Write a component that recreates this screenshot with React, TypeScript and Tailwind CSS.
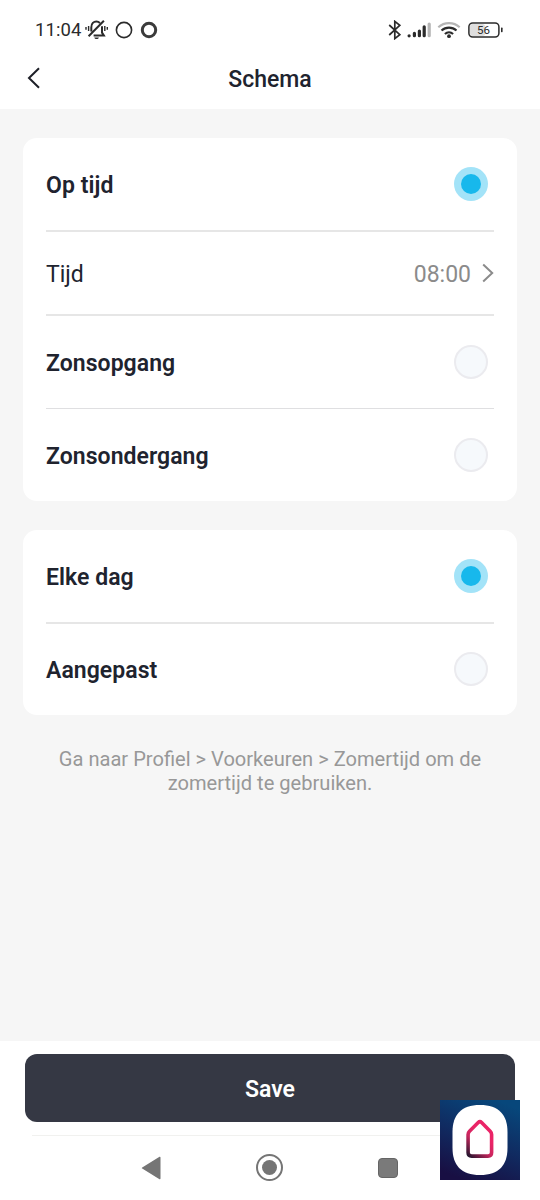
import { useState } from 'react';

interface RadioRowProps {
  label: string;
  checked: boolean;
  onSelect: () => void;
}

function StatusBar() {
  return (
    <div className="flex h-[48px] items-start justify-between pt-[19px] pr-[37px] pl-[35px] text-[#2b2b2b]">
      <div className="flex h-[22px] items-center">
        <span className="w-[50px] text-[18.5px] leading-[22px] tracking-[0.1px] whitespace-nowrap">11:04</span>
        {/* Silent mode */}
        <svg className="h-[22px] w-[24px]" viewBox="0 0 24 22" fill="none" stroke="currentColor" strokeWidth="2">
          <path d="M6.3 12.5V8.4C6.3 4.5 8.7 2.6 11.4 2.6c1.5 0 2.6.5 3.5 1.3M17 7.2v6.4l1.9 3H8.6M18.9 1.8 3.6 17.2" />
          <path d="M3.6 6.9v5M1 8v2.8M19.8 6.9v5M22.3 8v2.8" strokeWidth="1.4" />
          <path d="M9.3 18.4h4.6c-.5 2-4.1 2-4.6 0z" fill="currentColor" stroke="none" />
        </svg>
        <svg className="ml-[6px] size-[18px]" viewBox="0 0 18 18" fill="none" stroke="currentColor">
          <circle cx="9" cy="9" r="7.6" strokeWidth="1.6" />
        </svg>
        <svg className="ml-[7px] size-[18px]" viewBox="0 0 18 18" fill="none" stroke="#3b3b3b">
          <circle cx="9" cy="9" r="6.7" strokeWidth="3" />
        </svg>
      </div>
      <div className="flex h-[22px] items-center">
        {/* Bluetooth */}
        <svg className="h-[20px] w-[14px]" viewBox="0 0 14 20" fill="none" stroke="currentColor" strokeWidth="1.7">
          <path d="m1.2 5 10.6 9.6-5 4V1.4l5 4L1.2 15" />
        </svg>
        {/* Signal */}
        <svg className="ml-[5px] h-[16px] w-[24px]" viewBox="0 0 24 16" fill="none" stroke="currentColor" strokeWidth="3.2" strokeLinecap="round">
          <path d="M2.1 13.8v0" />
          <path d="M7.4 13.7v-2.4M12.4 13.7V9M17.2 13.7V4.8" />
          <path d="M22.2 13.7V2" stroke="#b5b5b5" />
        </svg>
        {/* Wifi */}
        <svg className="ml-[6px] h-[18px] w-[24px]" viewBox="0 0 24 18" fill="none" stroke="currentColor" strokeWidth="2.1">
          <path d="M1.3 6.2c6.1-5.5 15.3-5.5 21.4 0" stroke="#b5b5b5" />
          <path d="M4.5 9.6c4.3-4 10.7-4 15 0M7.9 13c2.4-2.2 5.8-2.2 8.2 0" />
          <circle cx="12" cy="15.2" r="1.9" fill="currentColor" stroke="none" />
        </svg>
        {/* Battery */}
        <svg className="ml-[7px] h-[16px] w-[35px]" viewBox="0 0 35 16">
          <rect x="2" y="2" width="15" height="12" rx="2.5" fill="#dedede" />
          <rect x="0.9" y="1" width="30" height="14" rx="3.8" fill="none" stroke="currentColor" strokeWidth="1.5" />
          <rect x="33" y="5.6" width="1.6" height="4.6" rx="0.6" fill="currentColor" />
          <text x="15.5" y="12.2" textAnchor="middle" fontSize="11.5" fill="currentColor">56</text>
        </svg>
      </div>
    </div>
  );
}

function Header() {
  return (
    <header className="grid h-[61px] grid-cols-[1fr_auto_1fr] items-center">
      <button className="pb-[2px] pl-[27px]" aria-label="Terug">
        <svg className="h-[22px] w-[13px]" viewBox="0 0 13 22" fill="none" stroke="#1d1f27" strokeWidth="2">
          <path d="M12 1.3 2 11l10 9.7" />
        </svg>
      </button>
      <h1 className="pt-[2px] text-[23px] leading-[28px] font-medium">Schema</h1>
    </header>
  );
}

function RadioRow({ label, checked, onSelect }: RadioRowProps) {
  return (
    <button
      role="radio"
      aria-checked={checked}
      onClick={onSelect}
      className="flex h-[92px] w-full items-center justify-between pr-[6px] text-left"
    >
      <span className="pt-[4px] text-[23px] leading-[28px] font-semibold tracking-[0.05px]">{label}</span>
      {checked ? (
        <span className="flex size-[34px] items-center justify-center rounded-full bg-[#a3e3f8]">
          <span className="size-[20px] rounded-full bg-[#17b8ec]"></span>
        </span>
      ) : (
        <span className="size-[34px] rounded-full border-2 border-[#ebebef] bg-[#f6f9fc]"></span>
      )}
    </button>
  );
}

function AppBadge() {
  return (
    <div className="absolute top-[1100px] left-[440px] size-[80px]">
      <svg className="size-full" viewBox="0 0 80 80">
        <defs>
          <linearGradient id="badge-bg" x1="0.7" y1="0" x2="0.3" y2="1">
            <stop offset="0" stopColor="#07477b" />
            <stop offset="0.5" stopColor="#102b61" />
            <stop offset="1" stopColor="#180f43" />
          </linearGradient>
          <linearGradient id="badge-house" gradientUnits="userSpaceOnUse" x1="46" y1="38" x2="29" y2="57">
            <stop offset="0" stopColor="#ea2467" />
            <stop offset="0.4" stopColor="#c8265d" />
            <stop offset="1" stopColor="#24152e" />
          </linearGradient>
        </defs>
        <rect width="80" height="80" fill="url(#badge-bg)" />
        <path d="M40 5c19 0 27.5 10 27.5 27v16c0 17-8.5 27-27.5 27S12.5 65 12.5 48V32C12.5 15 21 5 40 5z" fill="#fff" />
        <path
          d="M28.1 34.5c0-1.3.5-2.3 1.4-3.2l8.7-8.7c1-1 2.4-1 3.4 0l8.6 8.7c.9.9 1.4 1.9 1.4 3.2v18c0 2.300-1.300 3.600-3.600 3.600H31.700c-2.300 0-3.600-1.300-3.600-3.600z"
          fill="none"
          stroke="url(#badge-house)"
          strokeWidth="3.6"
        />
      </svg>
    </div>
  );
}

export default function App() {
  const [moment, setMoment] = useState('tijd');
  const [herhaling, setHerhaling] = useState('elke-dag');

  return (
    <div className="relative flex h-[1200px] w-[540px] flex-col overflow-hidden bg-white font-[Roboto,sans-serif] text-[#20232e]">
      <StatusBar />
      <Header />

      <main className="flex-1 bg-[#f6f6f6] px-[23px] pt-[29px]">
        <section className="rounded-[14px] bg-white px-[23px]" role="radiogroup">
          <RadioRow label="Op tijd" checked={moment === 'tijd'} onSelect={() => setMoment('tijd')} />
          <div className="flex h-[86px] items-center justify-between border-y-2 border-[#e6e6e6]">
            <span className="pt-[3px] text-[23px] leading-[28px]">Tijd</span>
            <span className="flex items-center gap-[11px] text-[#8b8b8b]">
              <span className="pt-[3px] text-[23px] leading-[28px]">08:00</span>
              <svg className="h-[20px] w-[12px]" viewBox="0 0 12 20" fill="none" stroke="currentColor" strokeWidth="2">
                <path d="m1.2 1.5 9 8.5-9 8.5" />
              </svg>
            </span>
          </div>
          <RadioRow label="Zonsopgang" checked={moment === 'opgang'} onSelect={() => setMoment('opgang')} />
          <div className="h-px bg-[#dfdfe1]"></div>
          <RadioRow label="Zonsondergang" checked={moment === 'ondergang'} onSelect={() => setMoment('ondergang')} />
        </section>

        <section className="mt-[29px] rounded-[14px] bg-white px-[23px]" role="radiogroup">
          <RadioRow label="Elke dag" checked={herhaling === 'elke-dag'} onSelect={() => setHerhaling('elke-dag')} />
          <div className="-mb-px h-[2px] bg-[#e6e6e6]"></div>
          <RadioRow label="Aangepast" checked={herhaling === 'aangepast'} onSelect={() => setHerhaling('aangepast')} />
        </section>

        <p className="mt-[32px] text-center text-[20.1px] leading-[24px] text-[#989898]">
          Ga naar Profiel &gt; Voorkeuren &gt; Zomertijd om de
          <br />
          zomertijd te gebruiken.
        </p>
      </main>

      <footer className="h-[159px] px-[25px] pt-[13px]">
        <button className="flex h-[68px] w-full items-center justify-center rounded-[12px] bg-[#353844] pt-[4px] text-[23px] font-semibold text-white">
          Save
        </button>
        <div className="mt-[13px] ml-[7px] h-px bg-[#f1f1ef]"></div>
        {/* Android navigation */}
        <div className="mt-[18px] flex items-center justify-between pr-[117px] pl-[116px] text-[#757575]">
          <svg className="h-[24px] w-[20px]" viewBox="0 0 20 24" fill="currentColor">
            <path d="M18.5.8c.5-.3 1 0 1 .6v21.2c0 .6-.5.9-1 .6L1.2 12.6c-.5-.3-.5-.9 0-1.2z" />
          </svg>
          <span className="flex size-[27px] items-center justify-center rounded-full border-2 border-[#757575]">
            <span className="size-[15px] rounded-full bg-[#757575]"></span>
          </span>
          <span className="size-[20px] rounded-[4px] border border-[#656565] bg-[#7a7a7a]"></span>
        </div>
      </footer>

      <AppBadge />
    </div>
  );
}
